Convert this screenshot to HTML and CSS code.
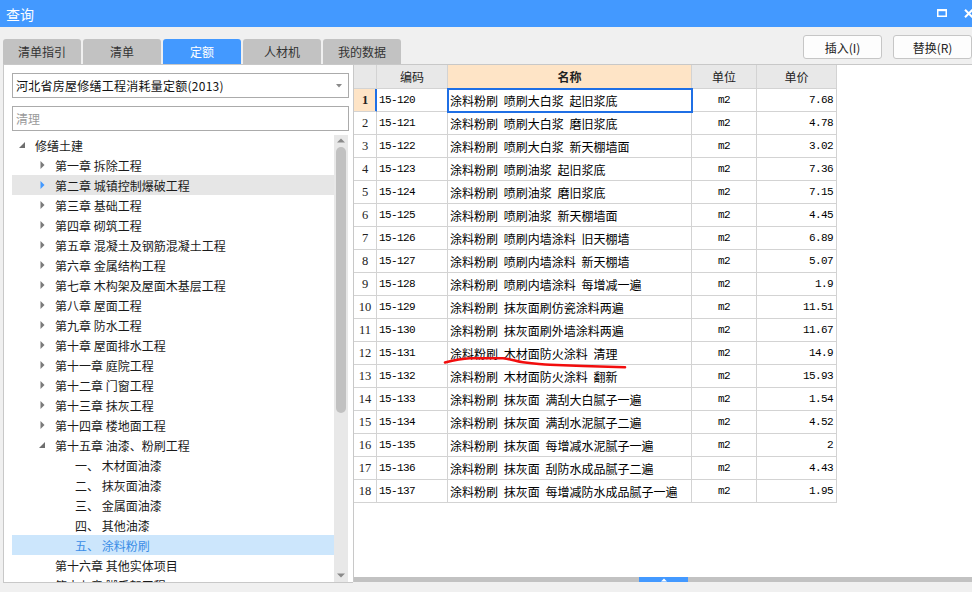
FILE: index.html
```html
<!DOCTYPE html>
<html lang="zh-CN">
<head>
<meta charset="utf-8">
<title>查询</title>
<link rel="stylesheet" href="styles.css">
</head>
<body>
<div class="titlebar">
  <span class="title">查询</span>
  <div class="win-ctrls">
    <svg class="ico-max" width="10" height="8" viewBox="0 0 10 8"><rect x="0.75" y="1" width="8.5" height="6.25" fill="none" stroke="#fff" stroke-width="1.5"/><rect x="0" y="0" width="10" height="2.2" fill="#fff"/></svg>
    <svg class="ico-close" width="11" height="9" viewBox="0 0 11 9"><path d="M1 0.8 L8.5 8.2 M8.5 0.8 L1 8.2" stroke="#fff" stroke-width="2"/></svg>
  </div>
</div>
<div class="toolbar">
  <div class="tabs">
    <div class="tab">清单指引</div>
    <div class="tab">清单</div>
    <div class="tab active">定额</div>
    <div class="tab">人材机</div>
    <div class="tab">我的数据</div>
  </div>
  <div class="btns">
    <div class="btn">插入(I)</div>
    <div class="btn">替换(R)</div>
  </div>
</div>
<div class="main">
  <div class="left">
    <div class="select">
      <span class="select-text">河北省房屋修缮工程消耗量定额(2013)</span>
      <svg class="caret" width="6" height="4" viewBox="0 0 6 4"><path d="M0 0 H6 L3 3.5z" fill="#8a8a8a"/></svg>
    </div>
    <div class="search">清理</div>
    <div class="treewrap">
      <div class="tree">
        <div class="node l0"><span class="tog"><svg width="6" height="6" viewBox="0 0 6 6"><path d="M6 0 V6 H0z" fill="#6e6e6e"/></svg></span><span class="lbl">修缮土建</span></div>
        <div class="node l1"><span class="tog"><svg width="5" height="8" viewBox="0 0 5 8"><path d="M0.5 0 L4.5 4 L0.5 8z" fill="#7a7a7a"/></svg></span><span class="lbl">第一章 拆除工程</span></div>
        <div class="node l1 hover"><span class="tog"><svg width="5" height="8" viewBox="0 0 5 8"><path d="M0.5 0 L4.5 4 L0.5 8z" fill="#4399ff"/></svg></span><span class="lbl">第二章 城镇控制爆破工程</span></div>
        <div class="node l1"><span class="tog"><svg width="5" height="8" viewBox="0 0 5 8"><path d="M0.5 0 L4.5 4 L0.5 8z" fill="#7a7a7a"/></svg></span><span class="lbl">第三章 基础工程</span></div>
        <div class="node l1"><span class="tog"><svg width="5" height="8" viewBox="0 0 5 8"><path d="M0.5 0 L4.5 4 L0.5 8z" fill="#7a7a7a"/></svg></span><span class="lbl">第四章 砌筑工程</span></div>
        <div class="node l1"><span class="tog"><svg width="5" height="8" viewBox="0 0 5 8"><path d="M0.5 0 L4.5 4 L0.5 8z" fill="#7a7a7a"/></svg></span><span class="lbl">第五章 混凝土及钢筋混凝土工程</span></div>
        <div class="node l1"><span class="tog"><svg width="5" height="8" viewBox="0 0 5 8"><path d="M0.5 0 L4.5 4 L0.5 8z" fill="#7a7a7a"/></svg></span><span class="lbl">第六章 金属结构工程</span></div>
        <div class="node l1"><span class="tog"><svg width="5" height="8" viewBox="0 0 5 8"><path d="M0.5 0 L4.5 4 L0.5 8z" fill="#7a7a7a"/></svg></span><span class="lbl">第七章 木构架及屋面木基层工程</span></div>
        <div class="node l1"><span class="tog"><svg width="5" height="8" viewBox="0 0 5 8"><path d="M0.5 0 L4.5 4 L0.5 8z" fill="#7a7a7a"/></svg></span><span class="lbl">第八章 屋面工程</span></div>
        <div class="node l1"><span class="tog"><svg width="5" height="8" viewBox="0 0 5 8"><path d="M0.5 0 L4.5 4 L0.5 8z" fill="#7a7a7a"/></svg></span><span class="lbl">第九章 防水工程</span></div>
        <div class="node l1"><span class="tog"><svg width="5" height="8" viewBox="0 0 5 8"><path d="M0.5 0 L4.5 4 L0.5 8z" fill="#7a7a7a"/></svg></span><span class="lbl">第十章 屋面排水工程</span></div>
        <div class="node l1"><span class="tog"><svg width="5" height="8" viewBox="0 0 5 8"><path d="M0.5 0 L4.5 4 L0.5 8z" fill="#7a7a7a"/></svg></span><span class="lbl">第十一章 庭院工程</span></div>
        <div class="node l1"><span class="tog"><svg width="5" height="8" viewBox="0 0 5 8"><path d="M0.5 0 L4.5 4 L0.5 8z" fill="#7a7a7a"/></svg></span><span class="lbl">第十二章 门窗工程</span></div>
        <div class="node l1"><span class="tog"><svg width="5" height="8" viewBox="0 0 5 8"><path d="M0.5 0 L4.5 4 L0.5 8z" fill="#7a7a7a"/></svg></span><span class="lbl">第十三章 抹灰工程</span></div>
        <div class="node l1"><span class="tog"><svg width="5" height="8" viewBox="0 0 5 8"><path d="M0.5 0 L4.5 4 L0.5 8z" fill="#7a7a7a"/></svg></span><span class="lbl">第十四章 楼地面工程</span></div>
        <div class="node l1"><span class="tog"><svg width="6" height="6" viewBox="0 0 6 6"><path d="M6 0 V6 H0z" fill="#6e6e6e"/></svg></span><span class="lbl">第十五章 油漆、粉刷工程</span></div>
        <div class="node l2"><span class="tog"></span><span class="lbl">一、 木材面油漆</span></div>
        <div class="node l2"><span class="tog"></span><span class="lbl">二、 抹灰面油漆</span></div>
        <div class="node l2"><span class="tog"></span><span class="lbl">三、 金属面油漆</span></div>
        <div class="node l2"><span class="tog"></span><span class="lbl">四、 其他油漆</span></div>
        <div class="node l2 sel"><span class="tog"></span><span class="lbl">五、 涂料粉刷</span></div>
        <div class="node l1"><span class="tog"></span><span class="lbl">第十六章 其他实体项目</span></div>
        <div class="node l1"><span class="tog"></span><span class="lbl">第十七章 脚手架工程</span></div>
      </div>
      <div class="vscroll">
        <svg class="arr-up" width="8" height="5" viewBox="0 0 8 5"><path d="M0 4.5 L4 0.5 L8 4.5z" fill="#8a8a8a"/></svg>
        <div class="vthumb"></div>
        <div class="vspacer"></div>
        <svg class="arr-down" width="8" height="5" viewBox="0 0 8 5"><path d="M0 0.5 L8 0.5 L4 4.5z" fill="#8a8a8a"/></svg>
      </div>
    </div>
  </div>
  <div class="right">
    <div class="grid">
      <div class="c h"></div><div class="c h">编码</div><div class="c h hn">名称</div><div class="c h">单位</div><div class="c h">单价</div>

      <div class="c rn cur">1</div><div class="c cd">15-120</div><div class="c nm selcell">涂料粉刷 喷刷大白浆 起旧浆底</div><div class="c un">m2</div><div class="c pr">7.68</div>
      <div class="c rn">2</div><div class="c cd">15-121</div><div class="c nm">涂料粉刷 喷刷大白浆 磨旧浆底</div><div class="c un">m2</div><div class="c pr">4.78</div>
      <div class="c rn">3</div><div class="c cd">15-122</div><div class="c nm">涂料粉刷 喷刷大白浆 新天棚墙面</div><div class="c un">m2</div><div class="c pr">3.02</div>
      <div class="c rn">4</div><div class="c cd">15-123</div><div class="c nm">涂料粉刷 喷刷油浆 起旧浆底</div><div class="c un">m2</div><div class="c pr">7.36</div>
      <div class="c rn">5</div><div class="c cd">15-124</div><div class="c nm">涂料粉刷 喷刷油浆 磨旧浆底</div><div class="c un">m2</div><div class="c pr">7.15</div>
      <div class="c rn">6</div><div class="c cd">15-125</div><div class="c nm">涂料粉刷 喷刷油浆 新天棚墙面</div><div class="c un">m2</div><div class="c pr">4.45</div>
      <div class="c rn">7</div><div class="c cd">15-126</div><div class="c nm">涂料粉刷 喷刷内墙涂料 旧天棚墙</div><div class="c un">m2</div><div class="c pr">6.89</div>
      <div class="c rn">8</div><div class="c cd">15-127</div><div class="c nm">涂料粉刷 喷刷内墙涂料 新天棚墙</div><div class="c un">m2</div><div class="c pr">5.07</div>
      <div class="c rn">9</div><div class="c cd">15-128</div><div class="c nm">涂料粉刷 喷刷内墙涂料 每增减一遍</div><div class="c un">m2</div><div class="c pr">1.9</div>
      <div class="c rn">10</div><div class="c cd">15-129</div><div class="c nm">涂料粉刷 抹灰面刷仿瓷涂料两遍</div><div class="c un">m2</div><div class="c pr">11.51</div>
      <div class="c rn">11</div><div class="c cd">15-130</div><div class="c nm">涂料粉刷 抹灰面刷外墙涂料两遍</div><div class="c un">m2</div><div class="c pr">11.67</div>
      <div class="c rn">12</div><div class="c cd">15-131</div><div class="c nm">涂料粉刷 木材面防火涂料 清理</div><div class="c un">m2</div><div class="c pr">14.9</div>
      <div class="c rn">13</div><div class="c cd">15-132</div><div class="c nm">涂料粉刷 木材面防火涂料 翻新</div><div class="c un">m2</div><div class="c pr">15.93</div>
      <div class="c rn">14</div><div class="c cd">15-133</div><div class="c nm">涂料粉刷 抹灰面 满刮大白腻子一遍</div><div class="c un">m2</div><div class="c pr">1.54</div>
      <div class="c rn">15</div><div class="c cd">15-134</div><div class="c nm">涂料粉刷 抹灰面 满刮水泥腻子二遍</div><div class="c un">m2</div><div class="c pr">4.52</div>
      <div class="c rn">16</div><div class="c cd">15-135</div><div class="c nm">涂料粉刷 抹灰面 每增减水泥腻子一遍</div><div class="c un">m2</div><div class="c pr">2</div>
      <div class="c rn">17</div><div class="c cd">15-136</div><div class="c nm">涂料粉刷 抹灰面 刮防水成品腻子二遍</div><div class="c un">m2</div><div class="c pr">4.43</div>
      <div class="c rn">18</div><div class="c cd">15-137</div><div class="c nm">涂料粉刷 抹灰面 每增减防水成品腻子一遍</div><div class="c un">m2</div><div class="c pr">1.95</div>
    </div>
    <div class="hscroll">
      <div class="hthumb"><svg width="6" height="4" viewBox="0 0 6 4"><path d="M0 3.5 L3 0.5 L6 3.5z" fill="#fff"/></svg></div>
    </div>
    <svg class="mark" width="300" height="320" viewBox="0 0 300 320"><path d="M91 297.5 C100 295.2 108 293.6 116 293.3 L149 293.3 C158 294 162 296.5 169 297.3 C180 298.6 188 299.5 196 299.8 L229 301 L271 302.3" fill="none" stroke="#f20d0d" stroke-width="2.6" stroke-linecap="round" stroke-linejoin="round"/></svg>
  </div>
</div>
</body>
</html>
```

FILE: styles.css
```css
* { box-sizing: border-box; }
html, body { margin: 0; padding: 0; }
body {
  width: 972px;
  height: 592px;
  overflow: hidden;
  background: #f0f0f0;
  font-family: "Noto Sans CJK SC", "Noto Sans", sans-serif;
  color: #222;
}

/* title bar */
.titlebar {
  height: 27px;
  background: #4399ff;
  display: flex;
  align-items: center;
  padding-left: 6px;
  color: #fff;
  font-size: 14px;
  overflow: hidden;
}
.title { line-height: 1; }
.win-ctrls {
  margin-left: auto;
  display: flex;
  align-items: center;
  gap: 17px;
  margin-right: -3px;
}
.ico-max { display: block; margin-top: -2px; }
.ico-close { display: block; margin-top: -1px; }

/* toolbar */
.toolbar {
  height: 37px;
  display: flex;
  align-items: flex-start;
  padding-left: 3px;
}
.tabs {
  display: flex;
  gap: 2px;
  margin-top: 12px;
}
.tab {
  width: 78px;
  height: 25px;
  background: #c2c2c2;
  border-radius: 3px 3px 0 0;
  font-size: 12px;
  color: #333;
  display: flex;
  align-items: center;
  justify-content: center;
}
.tab.active { background: #4399ff; color: #fff; }
.btns {
  margin-left: auto;
  display: flex;
  gap: 11px;
  margin-top: 8px;
}
.btn {
  width: 79px;
  height: 24px;
  border: 1px solid #c6c6c6;
  border-radius: 3px;
  background: #fdfdfd;
  font-size: 12px;
  color: #222;
  display: flex;
  align-items: center;
  justify-content: center;
}

/* main */
.main {
  display: flex;
  height: 519px;
  padding-left: 3px;
}
.left {
  width: 350px;
  height: 519px;
  border: 1px solid #c8c8c8;
  border-right: none;
  background: #fff;
  display: flex;
  flex-direction: column;
  padding: 8px 4px 0 8px;
}
.select {
  height: 25px;
  border: 1px solid #ababab;
  display: flex;
  align-items: center;
  padding: 0 6px 0 3px;
  font-size: 12px;
  color: #111;
  flex: none;
}
.select-text { letter-spacing: 0.25px; }
.caret { margin-left: auto; display: block; }
.search {
  margin-top: 8px;
  height: 25px;
  border: 1px solid #ababab;
  padding-left: 3px;
  font-size: 12px;
  color: #9a9a9a;
  display: flex;
  align-items: center;
  flex: none;
}
.treewrap {
  margin-top: 4px;
  flex: 1;
  min-height: 0;
  display: flex;
  overflow: hidden;
}
.tree {
  flex: 1;
  overflow: hidden;
}
.node {
  height: 20px;
  display: flex;
  align-items: center;
  font-size: 12px;
  color: #1a1a1a;
  white-space: nowrap;
}
.node.l1 { padding-left: 20px; }
.node.l2 { padding-left: 40px; }
.tog {
  width: 20px;
  height: 20px;
  display: flex;
  align-items: center;
  justify-content: center;
  flex: none;
}
.tog svg { display: block; }
.lbl { margin-left: 3px; }
.node.hover { background: #e6e6e6; }
.node.sel { background: #cce6fc; color: #3b8de6; }

.vscroll {
  width: 14px;
  margin-right: 1px;
  background: #e8e8e8;
  display: flex;
  flex-direction: column;
  align-items: center;
  padding: 3px 0 4px;
  flex: none;
}
.arr-up, .arr-down { display: block; flex: none; }
.vthumb {
  margin-top: 4px;
  width: 10px;
  height: 266px;
  border-radius: 5px;
  background: #c1c1c1;
  flex: none;
}
.vspacer { flex: 1; }

/* right grid */
.right {
  flex: 1;
  height: 518px;
  border-top: 1px solid #c8c8c8;
  border-left: 1px solid #c8c8c8;
  background: #fff;
  position: relative;
  display: flex;
  flex-direction: column;
}
.grid {
  display: grid;
  grid-template-columns: 23px 71px 244px 65px 80px;
  grid-template-rows: 24px;
  grid-auto-rows: 23px;
  width: max-content;
}
.c {
  border-right: 1px solid #d3d3d3;
  border-bottom: 1px solid #d3d3d3;
  font-size: 12px;
  display: flex;
  align-items: center;
  white-space: nowrap;
  overflow: hidden;
  color: #000;
}
.h {
  background: #e8e8e8;
  justify-content: center;
  color: #222;
}
.h.hn { background: #fee4c6; font-weight: bold; }
.rn {
  justify-content: center;
  font-family: "Liberation Serif", serif;
  font-size: 12.5px;
  color: #222;
}
.rn.cur {
  background: #fee4c6;
  font-weight: bold;
  border-right-color: #1f6fe5;
  box-shadow: inset -1px 0 0 #1f6fe5;
}
.cd, .un, .pr {
  font-family: "Liberation Mono", monospace;
  font-size: 11px;
  letter-spacing: -0.6px;
}
.cd { padding-left: 2px; }
.nm { padding-left: 2px; word-spacing: 3px; }
.un { justify-content: center; }
.pr { justify-content: flex-end; padding-right: 3px; }
.selcell {
  outline: 2px solid #1f6fe5;
  outline-offset: -1px;
  position: relative;
  z-index: 1;
}

.hscroll {
  margin-top: auto;
  height: 5px;
  background: #c2c2c2;
  display: flex;
  flex: none;
}
.hthumb {
  margin-left: 285px;
  width: 49px;
  height: 5px;
  background: #4399ff;
  display: flex;
  align-items: center;
  justify-content: center;
}
.hthumb svg { display: block; }

.mark {
  position: absolute;
  left: 0;
  top: 0;
  pointer-events: none;
  z-index: 2;
}
```
